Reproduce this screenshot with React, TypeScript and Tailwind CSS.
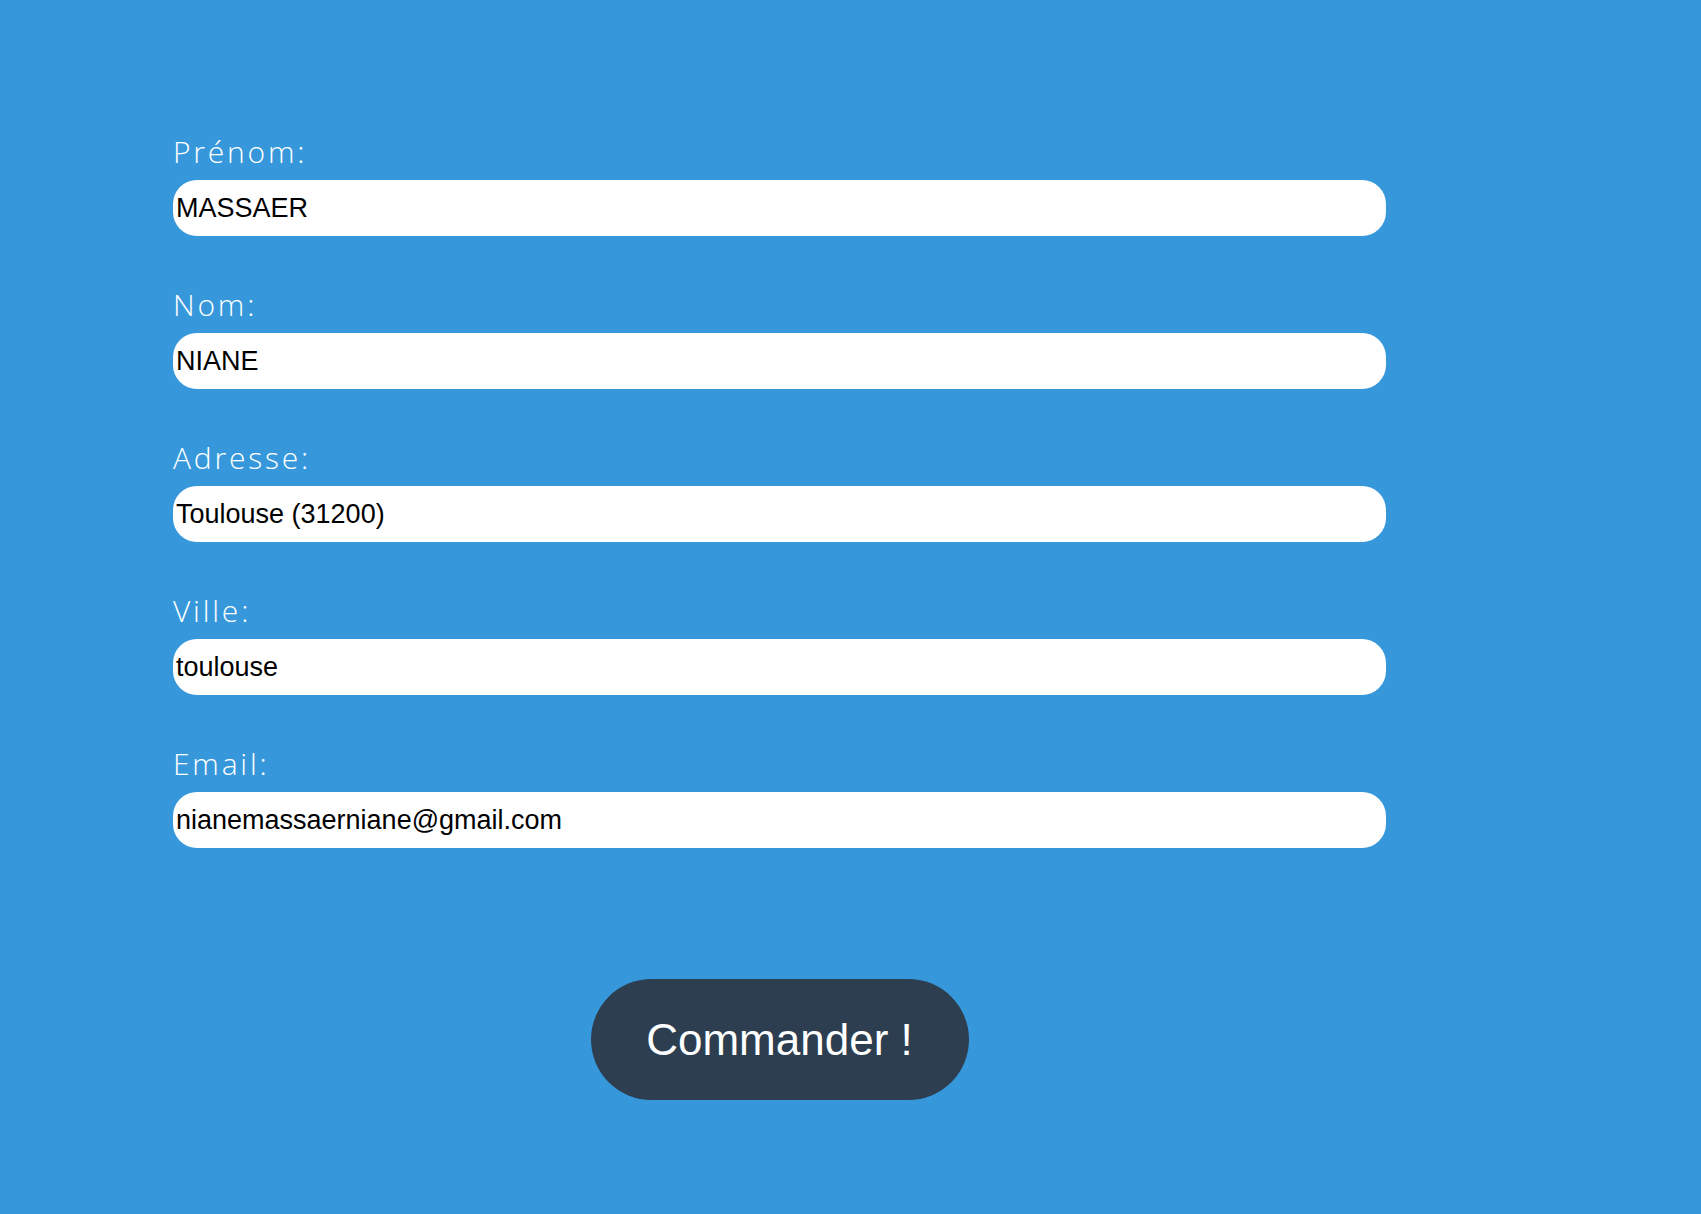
const fields = [
  { id: "prenom", label: "Prénom:", value: "MASSAER", type: "text" },
  { id: "nom", label: "Nom:", value: "NIANE", type: "text" },
  { id: "adresse", label: "Adresse:", value: "Toulouse (31200)", type: "text" },
  { id: "ville", label: "Ville:", value: "toulouse", type: "text" },
  { id: "email", label: "Email:", value: "nianemassaerniane@gmail.com", type: "email" },
];

export default function App() {
  return (
    <div className="min-h-[1214px] w-full bg-[#3698db] pt-[130px]">
      <form className="ml-[173px] flex w-[1213px] flex-col" onSubmit={(e) => e.preventDefault()}>
        {fields.map((f) => (
          <div key={f.id} className="mb-[47px] flex flex-col">
            <label
              htmlFor={f.id}
              className="mb-[6px] text-[30px] leading-[44px] font-light tracking-[2.8px] text-white"
              style={{ fontFamily: '"Open Sans", "Noto Sans", sans-serif' }}
            >
              {f.label}
            </label>
            <input
              id={f.id}
              type={f.type}
              defaultValue={f.value}
              className="h-[56px] w-full rounded-[24px] bg-white px-[3px] text-[27px] text-black outline-none"
              style={{ fontFamily: '"Liberation Sans", Arial, sans-serif' }}
            />
          </div>
        ))}
        <div className="mt-[84px] flex justify-center">
          <button
            type="submit"
            className="h-[121px] w-[378px] rounded-full bg-[#2c3e50] text-[44px] text-white"
            style={{ fontFamily: '"Liberation Sans", Arial, sans-serif' }}
          >
            Commander !
          </button>
        </div>
      </form>
    </div>
  );
}
